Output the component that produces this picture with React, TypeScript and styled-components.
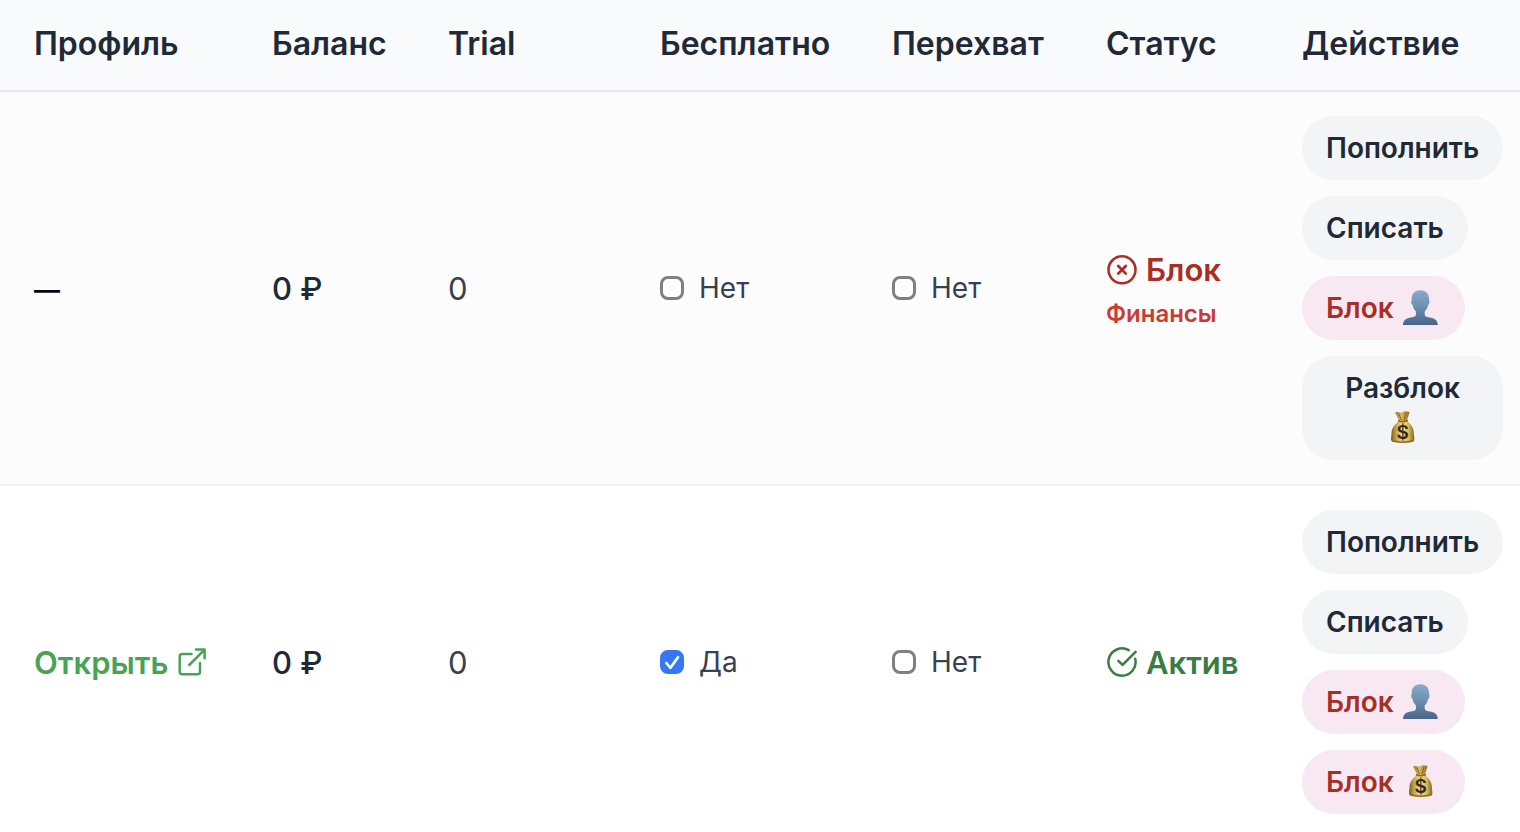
import React, { useState } from "react";
import styled, { createGlobalStyle } from "styled-components";

const GlobalStyle = createGlobalStyle`
  *, *::before, *::after { box-sizing: border-box; }
  body {
    margin: 0;
    background: #ffffff;
    color: #1f2937;
    font-family: Inter, "Liberation Sans", sans-serif;
    -webkit-font-smoothing: antialiased;
  }
`;

const Table = styled.table`
  width: 100%;
  table-layout: fixed;
  border-collapse: separate;
  border-spacing: 0;
  font-size: 31px;
  line-height: 40px;
`;

const Column = styled.col<{ $width: number }>`
  width: ${(p) => p.$width}px;
`;

const HeadCell = styled.th`
  padding: 24px 0 26px 34px;
  border-bottom: 2px solid #e5e7eb;
  background: #f9fafc;
  color: #1f2937;
  font-size: 32px;
  font-weight: 600;
  text-align: left;
  white-space: nowrap;
`;

const Row = styled.tr<{ $muted?: boolean }>`
  background: ${(p) => (p.$muted ? "#fcfcfc" : "#ffffff")};
`;

const Cell = styled.td`
  padding: 24px 0 24px 34px;
  border-bottom: 2px solid #f1f2f4;
  vertical-align: middle;
  white-space: nowrap;
`;

const TextCell = styled(Cell)<{ $tone?: "strong" | "soft" }>`
  padding-top: 26px;
  color: ${(p) => (p.$tone === "soft" ? "#374151" : "#1f2937")};
  font-weight: ${(p) => (p.$tone === "strong" ? 500 : 400)};
`;

const ActionCell = styled(Cell)`
  padding-right: 17px;
`;

const EmptyMark = styled.span`
  color: #030712;
  font-size: 26px;
  font-weight: 600;
`;

const ProfileLink = styled.a`
  display: inline-flex;
  align-items: center;
  gap: 8px;
  color: #4aa354;
  font-weight: 600;
  text-decoration: none;
  vertical-align: top;
`;

const CheckLabel = styled.label`
  display: flex;
  align-items: center;
  gap: 15px;
  color: #374151;
  font-size: 28px;
  cursor: pointer;
`;

const Box = styled.span`
  display: grid;
  flex: none;
  width: 24px;
  height: 24px;

  > * {
    grid-area: 1 / 1;
  }

  svg {
    pointer-events: none;
  }
`;

const Checkbox = styled.input`
  appearance: none;
  width: 24px;
  height: 24px;
  margin: 0;
  border: 3px solid #808080;
  border-radius: 8px;
  background: #ffffff;

  &:checked {
    border-color: #3478f6;
    background: #3478f6;
  }
`;

const StatusLine = styled.div<{ $active?: boolean }>`
  display: flex;
  align-items: center;
  gap: 8px;
  color: ${(p) => (p.$active ? "#3a7d44" : "#aa2e25")};
  font-weight: 600;
`;

const StatusReason = styled.div`
  padding-top: 10px;
  color: #cc3b31;
  font-size: 24px;
  font-weight: 600;
  line-height: 28px;
`;

const Actions = styled.div`
  display: flex;
  flex-direction: column;
  align-items: flex-start;
  gap: 16px;
`;

const ActionButton = styled.button<{ $danger?: boolean }>`
  max-width: 100%;
  padding: 12px 24px;
  border: 0;
  border-radius: 32px;
  background: ${(p) => (p.$danger ? "#f8e8f1" : "#f3f4f6")};
  color: ${(p) => (p.$danger ? "#aa2e25" : "#1f2937")};
  font-family: inherit;
  font-size: 28px;
  font-weight: 600;
  line-height: 40px;
  white-space: normal;
  cursor: pointer;

  svg {
    vertical-align: top;
  }
`;

const ExternalIcon = () => (
  <svg width="32" height="32" viewBox="0 0 32 32" fill="none" stroke="currentColor" strokeWidth="2.5" strokeLinecap="round" strokeLinejoin="round" aria-hidden="true">
    <path d="M15.5 7H6.2Q3.7 7 3.7 9.5V24.7Q3.7 27.2 6.2 27.2H21.5Q24 27.2 24 24.7V16" />
    <path d="M13.2 18 28.4 2.8M20 2.6H28.6V11.2" />
  </svg>
);

const BlockedIcon = () => (
  <svg width="32" height="32" viewBox="0 0 32 32" fill="none" stroke="currentColor" strokeWidth="2.5" strokeLinecap="round" aria-hidden="true">
    <circle cx="16" cy="15.8" r="13.5" />
    <path d="M12.2 12 19.8 19.6M19.8 12 12.2 19.6" strokeWidth="2.7" />
  </svg>
);

const ActiveIcon = () => (
  <svg width="32" height="32" viewBox="0 0 32 32" fill="none" stroke="currentColor" strokeWidth="2.5" strokeLinecap="round" strokeLinejoin="round" aria-hidden="true">
    <path d="M22.7 3.2A13.6 13.6 0 1 0 29.2 11.8" />
    <path d="M12.4 13.8 16.5 17.9 29.6 4.9" />
  </svg>
);

const PersonEmoji = () => (
  <svg width="40" height="40" viewBox="-1 -1 40 40" role="img" aria-label="пользователь">
    <defs>
      <linearGradient id="person" x1="0" y1="0" x2="0" y2="1">
        <stop offset="0" stopColor="#8aabc8" />
        <stop offset="0.5" stopColor="#6b8db0" />
        <stop offset="1" stopColor="#486586" />
      </linearGradient>
    </defs>
    <path
      d="M18.3 1.3C12.5 1.3 9.6 4.9 9.7 10.2C9.7 11 9.6 11.4 9.3 11.8C8.8 12.7 9.4 15.5 10.6 16.1C11 19 12.5 21.3 14 22.6V25.2C14 27.2 12.4 27.9 9 28.4C4.5 29 1.2 30.6 1 36H35.8C35.6 30.6 32.2 29 27.7 28.4C24.3 27.9 22.7 27.2 22.7 25.2V22.6C24.2 21.3 25.7 19 26.1 16.1C27.3 15.5 27.9 12.7 27.4 11.8C27.1 11.4 27 11 27 10.2C27.1 4.9 24.1 1.3 18.3 1.3Z"
      fill="url(#person)"
    />
  </svg>
);

const MoneyEmoji = () => (
  <svg width="40" height="40" viewBox="-1 -1 40 40" role="img" aria-label="финансы">
    <defs>
      <linearGradient id="bag" x1="0" y1="0" x2="1" y2="0">
        <stop offset="0" stopColor="#77591d" />
        <stop offset="0.18" stopColor="#b99a42" />
        <stop offset="0.45" stopColor="#f0dc82" />
        <stop offset="0.75" stopColor="#d9bd5c" />
        <stop offset="1" stopColor="#80601f" />
      </linearGradient>
      <linearGradient id="neck" x1="0" y1="0" x2="1" y2="0">
        <stop offset="0" stopColor="#a47c35" />
        <stop offset="0.45" stopColor="#d9b764" />
        <stop offset="1" stopColor="#8f6927" />
      </linearGradient>
    </defs>
    <path d="M11.2 3.5Q13.4 2.2 15.2 3.3Q17.2 4.2 19 2.8Q21.5 1.8 25.6 3L22.8 12H15.2Z" fill="url(#neck)" />
    <path d="M14.6 4.5 17.6 11M21.8 4 20 11" stroke="#7d5b22" strokeWidth="0.9" fill="none" />
    <path d="M15.2 12H23C26.5 14.5 29.8 19 29.8 23.5C29.8 26 30.6 28.5 30.3 31C29.8 33.3 26 34 18.7 34C11.5 34 7.6 33.3 7.1 31C6.8 28.5 7.6 26 7.6 23.5C7.6 19 11.5 14.5 15.2 12Z" fill="url(#bag)" />
    <path d="M8 31.5Q18.7 35 29.5 31.5" stroke="#8b6a27" strokeWidth="1.6" fill="none" />
    <path d="M14.6 12Q18.7 13.6 23.3 11.7" stroke="#8d6524" strokeWidth="1.7" strokeLinecap="round" fill="none" />
    <text x="18.6" y="30" textAnchor="middle" fontFamily="Inter, sans-serif" fontSize="19" fontWeight="600" fill="#2e2b22">$</text>
  </svg>
);

function Toggle({ initial = false, name }: { initial?: boolean; name: string }) {
  const [checked, setChecked] = useState(initial);
  return (
    <CheckLabel>
      <Box>
        <Checkbox type="checkbox" name={name} checked={checked} onChange={(e) => setChecked(e.target.checked)} />
        {checked && (
          <svg width="24" height="24" viewBox="0 0 24 24" fill="none" stroke="#ffffff" strokeWidth="2.6" strokeLinecap="round" strokeLinejoin="round" aria-hidden="true">
            <path d="M6.3 13 10.5 17.8 18 7.2" />
          </svg>
        )}
      </Box>
      {checked ? "Да" : "Нет"}
    </CheckLabel>
  );
}

const columns = [
  { title: "Профиль", width: 238 },
  { title: "Баланс", width: 176 },
  { title: "Trial", width: 212 },
  { title: "Бесплатно", width: 232 },
  { title: "Перехват", width: 214 },
  { title: "Статус", width: 196 },
  { title: "Действие", width: 252 },
];

interface User {
  id: number;
  link?: string;
  free: boolean;
  active: boolean;
  reason?: string;
}

const users: User[] = [
  { id: 1, free: false, active: false, reason: "Финансы" },
  { id: 2, link: "#profile", free: true, active: true },
];

export default function App() {
  return (
    <>
      <GlobalStyle />
      <Table>
        <colgroup>
          {columns.map((c) => (
            <Column key={c.title} $width={c.width} />
          ))}
        </colgroup>
        <thead>
          <tr>
            {columns.map((c) => (
              <HeadCell key={c.title} scope="col">{c.title}</HeadCell>
            ))}
          </tr>
        </thead>
        <tbody>
          {users.map((u) => (
            <Row key={u.id} $muted={!u.active}>
              <TextCell>
                {u.link ? (
                  <ProfileLink href={u.link}>
                    Открыть
                    <ExternalIcon />
                  </ProfileLink>
                ) : (
                  <EmptyMark>—</EmptyMark>
                )}
              </TextCell>
              <TextCell $tone="strong">0 ₽</TextCell>
              <TextCell $tone="soft">0</TextCell>
              <Cell><Toggle name={`free-${u.id}`} initial={u.free} /></Cell>
              <Cell><Toggle name={`intercept-${u.id}`} /></Cell>
              <TextCell>
                <StatusLine $active={u.active}>
                  {u.active ? <ActiveIcon /> : <BlockedIcon />}
                  {u.active ? "Актив" : "Блок"}
                </StatusLine>
                {u.reason && <StatusReason>{u.reason}</StatusReason>}
              </TextCell>
              <ActionCell>
                <Actions>
                  <ActionButton type="button">Пополнить</ActionButton>
                  <ActionButton type="button">Списать</ActionButton>
                  <ActionButton type="button" $danger>Блок <PersonEmoji /></ActionButton>
                  <ActionButton type="button" $danger={u.active}>
                    {u.active ? "Блок" : "Разблок"} <MoneyEmoji />
                  </ActionButton>
                </Actions>
              </ActionCell>
            </Row>
          ))}
        </tbody>
      </Table>
    </>
  );
}
